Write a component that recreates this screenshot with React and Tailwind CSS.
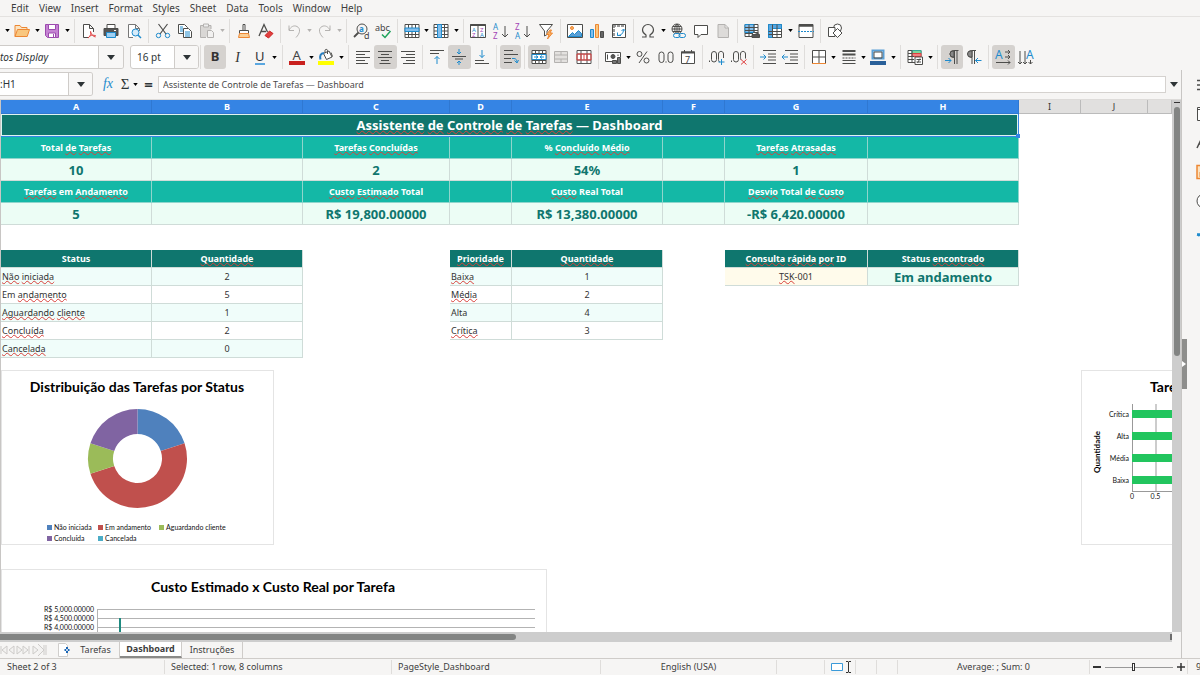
import React, { useState } from 'react';
import { clsx } from 'clsx';

const MENUS = ['Edit', 'View', 'Insert', 'Format', 'Styles', 'Sheet', 'Data', 'Tools', 'Window', 'Help'];

const BLUE = '#1e8bcd';
const ORANGE = '#ed8733';
const RED = '#e04040';
const GRAY = '#b4b2b0';

const letter = (x, y, size, fill, text, weight = 400) => (
  <text x={x} y={y} fontSize={size} fill={fill} stroke="none" fontWeight={weight} fontFamily="Noto Sans, sans-serif">{text}</text>
);

// Every glyph is drawn on a 16x16 grid with a dark 1px stroke by default
const ICONS = {
  open: <><path d="M1 13.5V2.5h5l1.5 2H13v2" fill="#fbe3c0" stroke={ORANGE} /><path d="M1 13.5l2.5-7h12l-2.3 7z" fill="#f9c77f" stroke={ORANGE} /></>,
  save: <><path d="M1.5 1.5h13v13h-11l-2-2z" fill="#c583d3" stroke="#9c4aae" /><path d="M4.5 1.5h7v5h-7z" fill="#fff" stroke="#9c4aae" /><path d="M4.5 10h7v4.5h-7z" fill="#fff" stroke="#9c4aae" /><path d="M9.5 11v3" stroke="#9c4aae" /></>,
  pdf: <><path d="M8 14.5H2.5v-13h6l4 4V9M8.5 1.5v4h4" fill="#fff" /><path d="M7 15c3-2 3-5 2.5-7M7 15c2-3 5-3.5 8-2M9.5 9c1 3 3 4.5 5 5" stroke={RED} /></>,
  print: <><path d="M4 5V1.5h8V5" fill="#fff" /><path d="M1 5.5h14v7H1z" fill="#555" /><path d="M3.5 9.5h9v5h-9z" fill="#9fd0f3" stroke={BLUE} /><path d="M11 7.5h2" stroke="#fff" /></>,
  preview: <><path d="M7 14.5H2.5v-13h7l4 4V8M9.5 1.5v4h4" fill="#fff" stroke="#777" /><circle cx="9.5" cy="9.5" r="3.5" fill="#d6ebfa" stroke={BLUE} /><path d="M12 12l3 3" stroke={BLUE} strokeWidth="1.5" /></>,
  cut: <><path d="M3.5 1L11 11M12.5 1L5 11" strokeWidth="1.2" /><circle cx="3.5" cy="12.5" r="2.2" stroke={BLUE} /><circle cx="12.5" cy="12.5" r="2.2" stroke={BLUE} /></>,
  copy: <><path d="M1.5 1.5h6l3 3v6h-9z" fill="#fff" /><path d="M3 4h3M3 6h3M3 8h3" stroke={BLUE} /><path d="M6.5 5.5h5l3 3v6h-8z" fill="#fff" /><path d="M8 9h5M8 11h5M8 13h5" stroke={BLUE} /></>,
  paste: <><path d="M7 14.5H1.5v-12H12V6" fill="#d9d7d5" stroke={GRAY} /><path d="M4.5 1h5v3h-5z" fill="#eee" stroke={GRAY} /><path d="M8.5 7.5h4l2 2v5h-6z" fill="#f2f1f0" stroke={GRAY} /></>,
  brush: <><path d="M7 1.5h2v6H7zM3.5 7.5h9v3h-9z" fill="#fff" /><path d="M3.5 10.5h9l1 4h-11z" fill="#fbcf96" stroke={ORANGE} /></>,
  clear: <><path d="M1 13L6 1.5 9.5 9M3 8.5h5" strokeWidth="1.3" /><path d="M7 12.5l4.5-4.5 3.5 2.5-4.5 4.5z" fill={RED} stroke="#c22" /></>,
  undo: <path d="M2 2.5v5h5M2 7c2-3.5 5-5 8-3.5 4 2 3 7-1 11" stroke={GRAY} />,
  redo: <path d="M14 2.5v5H9M14 7c-2-3.5-5-5-8-3.5-4 2-3 7 1 11" stroke={GRAY} />,
  find: <><circle cx="9" cy="6" r="5" /><path d="M5.5 9.5L1 14" strokeWidth="1.8" />{letter(6, 8.5, 8, BLUE, 'a', 700)}{letter(11, 16, 9, '#444', 'd')}</>,
  spell: <>{letter(0, 8, 9, '#444', 'abc')}<path d="M7 11.5l3 3 5.5-6.5" stroke="#1fa35b" strokeWidth="1.5" /></>,
  rows: <><path d="M1 1.5h14v13H1z" fill="#fff" /><path d="M1 11.5h14M4.5 1.5v13M8 1.5v13M11.5 1.5v13" /><path d="M1 5h14v3.5H1z" fill="#83beec" stroke={BLUE} /></>,
  cols: <><path d="M1 1.5h14v13H1z" fill="#fff" /><path d="M1 4.5h14M1 8h14M1 11.5h14M11.5 1.5v13" /><path d="M4.5 1.5h4v13h-4z" fill="#83beec" stroke={BLUE} /></>,
  sort: <><path d="M.5 1.5h15v13H.5zM8 2v12" fill="#fff" /><path d="M.5 2h15" strokeWidth="2" />{letter(2, 8.5, 6, BLUE, 'A')}{letter(10, 8.5, 6, '#a344b5', 'Z')}{letter(2, 14, 6, '#a344b5', 'Z')}{letter(10, 14, 6, BLUE, 'A')}</>,
  asc: <>{letter(0, 7, 8, BLUE, 'A')}{letter(0, 15.5, 8, '#a344b5', 'Z')}<path d="M12 3v11M9 11l3 3 3-3" /></>,
  desc: <>{letter(0, 7, 8, '#a344b5', 'Z')}{letter(0, 15.5, 8, BLUE, 'A')}<path d="M12 3v11M9 11l3 3 3-3" /></>,
  filter: <><path d="M1.5 1.5h13L9 8v3.5L6.5 13V8z" fill="#fff" /><path d="M12 7l-3.5 4.5H11L9.5 16l5-6H12L13.5 7z" fill="#f9b266" stroke={ORANGE} /></>,
  image: <><path d="M.5 1.5h15v13H.5z" fill="#fff" /><circle cx="5" cy="5" r="1.5" fill="#f9b266" stroke={ORANGE} /><path d="M1.5 13.5l4-4 2 2 4-4 3 3v3z" fill="#5a9fd6" stroke={BLUE} /></>,
  chart: <><path d="M1.5 6.5h3v8h-3z" fill="#83beec" stroke={BLUE} /><path d="M6.5 1.5h3v13h-3z" fill="#f9c77f" stroke={ORANGE} /><path d="M11.5 8.5h3v6h-3z" fill="#666" /></>,
  pivot: <><path d="M1.5 1.5h13v13h-13z" fill="#fff" /><path d="M2 3h12M3 2v12" stroke="#999" strokeWidth="2" strokeDasharray="3 1" /><path d="M6.5 9.5v3H10M6.5 12.5c3.5 0 6-2 6-6M10.5 8l2-2 2 2" stroke={BLUE} /></>,
  omega: <path d="M2 14h4v-2C3.5 10.5 2.5 9 2.5 7a5.5 5.5 0 0 1 11 0c0 2-1 3.5-3.5 5v2h4" strokeWidth="1.2" />,
  link: <><circle cx="7" cy="6" r="5" /><path d="M2 6h10M7 1v10M3 3.5h8M3 8.5h8M7 1C4 3.5 4 8.5 7 11M7 1c3 2.5 3 7.5 0 10" /><rect x="3.5" y="10.5" width="6.5" height="4" rx="2" fill="#f6f5f4" stroke={BLUE} /><rect x="9" y="10.5" width="6.5" height="4" rx="2" stroke={BLUE} /></>,
  comment: <path d="M1.5 2.5h13v9H8l-3 3v-3H1.5z" fill="#fff" />,
  header: <path d="M3 1.5h7l3.5 3.5v9.5H3zM10 1.5V5h3.5" fill="#dddbd9" stroke={GRAY} />,
  printArea: <><path d="M1 1.5h13v12H1z" fill="#fff" /><path d="M1 1.5h9v8H1z" fill="#83beec" stroke={BLUE} /><path d="M1 4.5h13M1 7.5h13M1 10.5h8M5 1.5v12M10 1.5v8" /><path d="M8 11.5h7.5v3H8zM9.5 9.5h4.5v2" fill="#555" /></>,
  freeze: <><path d="M1.5 1.5h13v13h-13z" fill="#fff" /><path d="M1.5 1.5h13v4h-9v9h-4z" fill="#5aa7e0" stroke={BLUE} /><path d="M1.5 8.5h13M1.5 11.5h13M5.5 1.5v13M10 1.5v13" /></>,
  split: <><path d="M1 1.5h14v13H1z" fill="#fff" /><path d="M1 2.5h14" strokeWidth="2.5" /><path d="M0 8.5h16" stroke={BLUE} strokeDasharray="2 1" /></>,
  shapes: <><circle cx="10.5" cy="5" r="4" fill="#fff" /><path d="M1.5 4.5H8v9H1.5z" fill="#fff" /><path d="M10.5 5.5l4.5 4.5-4.5 4.5L6 10z" fill="#fff" /></>,
  fontColor: <>{letter(3.5, 10.5, 13, '#444', 'A')}<path d="M0 14h16" stroke="#c9211e" strokeWidth="4" /></>,
  fill: <><path d="M5.5 4.5l5.5-2.500 3 6-5.5 2.500z" fill="#fff" /><path d="M7 4V1.500c0-1.500 2.500-1.500 2.500 0V5M13 3.500l1.500 4" /><path d="M2.500 10.500c-1-4 0-6 3.500-6.500" stroke="#2a7fc0" strokeWidth="2" /><path d="M0 14h16" stroke="#ffff00" strokeWidth="4" /></>,
  left: <path d="M1 2.5h14M1 5.5h9M1 8.5h14M1 11.5h9M1 14.5h12" />,
  center: <path d="M1 2.5h14M4 5.5h8M1 8.5h14M4 11.5h8M2.5 14.5h11" />,
  right: <path d="M1 2.5h14M6 5.5h9M1 8.5h14M6 11.5h9M3 14.5h12" />,
  top: <><path d="M1 1.5h14M1 4.5h9" /><path d="M8 15V7.5M5.5 10L8 7.5l2.5 2.5" stroke={BLUE} /></>,
  middle: <><path d="M1 7.5h14M4 10h8" /><path d="M8 0v5M6 3l2 2 2-2M8 16v-4M6 14l2-2 2 2" stroke={BLUE} /></>,
  bottom: <><path d="M1 11.5h9M1 14.5h14" /><path d="M8 1v7.5M5.5 6L8 8.5 10.5 6" stroke={BLUE} /></>,
  wrap: <><path d="M1 1.5h9M1 5.5h14M1 9.5h7M1 13.5h8" /><path d="M9 9.5h2c2 0 3 1.5 3 4M11.5 11.5l2.5 2.5 1.5-3" stroke={BLUE} /></>,
  merge: <><path d="M1 1.5h14v13H1zM1 4.5h14M1 11.5h14M4.5 1.5v13M8 1.5v13M11.5 1.5v13" fill="#fff" /><path d="M1 5.5h14v5H1z" fill="#fff" stroke={BLUE} /><path d="M3 8h4M9 8h4M5 6.5L7 8 5 9.5M11 6.5L9 8l2 1.5" stroke={BLUE} /></>,
  mergeOff: <><path d="M1.5 2.5h13v11h-13zM1.5 6h13M1.5 10h13M8 2.5V6M8 10v3.5" fill="#e3e1df" stroke={GRAY} /></>,
  split2: <><path d="M1 1.5h14v13H1zM1 5h14M1 11h14M5 1.5v13M11 1.5v13" fill="#fff" stroke="#555" /><path d="M1 5h14v6H1zM5 5v6M8 5v6M11 5v6" stroke={RED} /></>,
  currency: <><path d="M8 12.5H.5v-9h15V8" fill="#fff" /><circle cx="8" cy="7.5" r="2" fill="#555" /><path d="M2.5 5.5v5M13 5.5V7" /><path d="M7.5 11.5h4v3h-4zM12.5 8.5h3v6h-3z" fill="#777" /></>,
  percent: <><circle cx="4.500" cy="5" r="2.500" /><circle cx="11.500" cy="11.500" r="2.500" /><path d="M12 2.500L4 14" /></>,
  number: <><rect x="1" y="3" width="5" height="10.500" rx="2.500" /><rect x="10" y="3" width="5" height="10.500" rx="2.500" /><path d="M8 12.500v1" strokeWidth="1.200" /></>,
  date: <><path d="M1.5 3h13v11.500h-13z" fill="#fff" /><path d="M1 3.5h14" strokeWidth="2" /><path d="M4.5 1v2M11.5 1v2" />{letter(5, 13.5, 9, '#444', '7')}</>,
  addDec: <><path d="M0.500 11.500v1.500" /><rect x="2.500" y="2.500" width="5" height="10.500" rx="2.500" /><path d="M11 13c-1 0-1.500-1-1.500-2.500V5c0-3.500 5-3.500 5 0v4" /><path d="M12.5 10v6M9.5 13h6" stroke={BLUE} /></>,
  delDec: <><path d="M0.500 11.500v1.500" /><rect x="2.500" y="2.500" width="5" height="10.500" rx="2.500" /><path d="M10 11c-.5-1-.5-2-.5-6 0-3.500 5-3.500 5 0v4.500" /><path d="M10 10.5l5.5 5M15.5 10.5l-5.500 5" stroke={RED} /></>,
  indent: <><path d="M3 1.5h13M8 5h8M8 8h8M8 11h8M3 14.5h13" /><path d="M0 8h6M3.5 5.5L6 8l-2.5 2.5" stroke={BLUE} /></>,
  outdent: <><path d="M3 1.5h13M8 5h8M8 8h8M8 11h8M3 14.5h13" /><path d="M6 8H0M2.5 5.5L0 8l2.5 2.5" stroke={BLUE} /></>,
  borders: <><path d="M1.5 14V1.5h13V14M8 1.5V14M1.5 8h13" fill="#fff" /><path d="M1 14.5h14" stroke={ORANGE} /></>,
  lineStyle: <><path d="M1.5 2h13" strokeWidth="2" /><path d="M1.5 5.5h13" strokeWidth="2" /><path d="M1.5 9h13" strokeDasharray="2 1" /><path d="M1.5 11.5h13M1.5 14.5h13" /></>,
  borderColor: <><path d="M2.5 1.5h11v8h-11z" fill="#fff" stroke="#5a9fd6" strokeWidth="2" /><path d="M4 3h8v6H4z" /><path d="M0 14h16" stroke="#2a6099" strokeWidth="4" /></>,
  conditional: <><path d="M1 1.5h13v12H1z" fill="#fff" /><path d="M5 1.5h9v3H5z" fill="#7ed69a" stroke="#3a9" /><path d="M5 4.5h9v3H5z" fill="#f08080" stroke={RED} /><path d="M1 4.5h4M1 7.5h6M1 10.5h6M5 1.5v12" /><path d="M8 8h7.5v7.5H8z" fill="#fff" /><path d="M9.5 10.5h4.5M9.5 13h4.5M13 9.5l-2.5 4.5" /></>,
  ltr: <><path d="M14.5 1.5H9.5a3.5 3.5 0 0 0 0 7H10M10.5 2v13M13 2v13" /><path d="M10 2H9a3 3 0 0 0 0 6h1z" fill="#888" /><path d="M1 11.5h6M4.5 9L7 11.5 4.5 14" stroke={BLUE} /></>,
  rtl: <><path d="M10 1.5H5.5a3.5 3.5 0 0 0 0 7H6M6 2v13M8.5 2v13" /><path d="M6 2H4.5a3 3 0 0 0 0 6H6z" fill="#888" /><path d="M15.5 11.5h-6M12 9l-2.5 2.5L12 14" stroke={BLUE} /></>,
  horizontal: <>{letter(0, 10, 12, BLUE, 'A')}<path d="M10 3h5M13 1l2 2-2 2M10 8h5M13 6l2 2-2 2M1 13.5h14M13 11.5l2 2-2 2" /></>,
  vertical: <>{letter(8, 10, 12, BLUE, 'A')}<path d="M2 2v13M0 13l2 2 2-2M7 2v13M5 13l2 2 2-2M12.5 11v4M10.5 13l2 2 2-2" /></>,
  tabProps: <><path d="M1.5 1.5h14v13h-14zM1.5 3.5h14M5 7h6M5 10h6" fill="#fff" /></>,
  tabStyles: <><path d="M1 13L6.500 1.500 12 13M3 9h7" strokeWidth="1.500" /><path d="M4 15c3 1 5-1 8-1" stroke={BLUE} /></>,
  tabGallery: <><path d="M1 1.5h14v13H1z" fill="#fbe3c0" stroke={ORANGE} strokeWidth="1.5" /><path d="M4 13V8l4-4v9z" fill="#f9c77f" stroke={ORANGE} /></>,
  tabNavigator: <><circle cx="8" cy="8" r="7" fill="#fff" /><path d="M5 11l2-4 4-2-2 4z" fill={BLUE} stroke={BLUE} /></>,
  tabFunctions: <path d="M1 13c3 2 4-1 5-5M1 12h4" stroke={BLUE} strokeWidth="1.5" />,
  burger: <path d="M1 3.5h14M1 8h14M1 12.5h14" strokeWidth="1.5" />,
};

function Icon({ name }) {
  return (
    <svg viewBox="0 0 16 16" className="w-4 h-4 shrink-0 overflow-visible" fill="none" stroke="#4d4d4b" aria-hidden="true">
      {ICONS[name]}
    </svg>
  );
}

function Caret({ label, faded }) {
  return (
    <button aria-label={label} className="w-2 h-6 flex items-center justify-center shrink-0">
      <svg viewBox="0 0 6 4" className={clsx('w-[5px] h-[3px] shrink-0', faded ? 'fill-[#b4b2b0]' : 'fill-black')}><path d="M0 0h6L3 4z" /></svg>
    </button>
  );
}

// "|" after a name adds a drop-down arrow, "~" a faded one; "*" marks a pressed button
function Tools({ items, className }) {
  return (
    <div className={clsx('flex items-center px-[3px] h-6 shrink-0', className)}>
      {items.map((item) => {
        const name = item.replace(/[|~*]/g, '');
        return (
          <React.Fragment key={item}>
            {name && (
              <button
                aria-label={name}
                aria-pressed={item.includes('*')}
                className={clsx('flex-1 h-6 flex items-center justify-center rounded-[3px]', item.includes('*') && 'bg-[#d5d2cf]')}
              >
                {TEXT_BUTTONS[name] || <Icon name={name} />}
              </button>
            )}
            {/[|~]/.test(item) && <Caret label={`${name} options`} faded={item.includes('~')} />}
          </React.Fragment>
        );
      })}
    </div>
  );
}

const TEXT_BUTTONS = {
  bold: <span className="text-[13px] font-bold text-[#333]">B</span>,
  italic: <span className="text-[14px] italic font-['Liberation_Serif',serif] text-[#333]">I</span>,
  underline: <span className="text-[13px] leading-[14px] border-b-2 border-[#5aa7e0] text-[#333]">U</span>,
};

const SEP = 'border-r border-[#dfdddb]';

const STANDARD = [
  [['|', 'open|', 'save|'], 'w-[75px]'],
  [['pdf', 'print', 'preview'], 'w-[74px]'],
  [['cut', 'copy', 'paste~'], 'w-[81px]'],
  [['brush', 'clear'], 'w-[51px]'],
  [['undo~', 'redo~'], 'w-[66px]'],
  [['find', 'spell'], 'w-[51px]'],
  [['rows|', 'cols|'], 'w-[66px]'],
  [['sort', 'asc', 'desc', 'filter'], 'w-[97px]'],
  [['image', 'chart', 'pivot'], 'w-[73px]'],
  [['omega|', 'link', 'comment', 'header'], 'w-[104px]'],
  [['printArea', 'freeze|', 'split'], 'w-[83px]'],
  [['shapes'], 'w-[28px] border-r-0'],
];

const FORMATTING = [
  [['bold*', 'italic', 'underline|'], 'w-[82px]'],
  [['fontColor|', 'fill|'], 'w-[66px]'],
  [['left', 'center*', 'right'], 'w-[74px]'],
  [['top', 'middle*', 'bottom'], 'w-[74px]'],
  [['wrap*'], 'w-[28px]'],
  [['merge*', 'mergeOff', 'split2'], 'w-[74px]'],
  [['currency|', 'percent', 'number', 'date'], 'w-[104px]'],
  [['addDec', 'delDec'], 'w-[51px]'],
  [['indent', 'outdent'], 'w-[51px]'],
  [['borders|', 'lineStyle|', 'borderColor|'], 'w-[96px]'],
  [['conditional|'], 'w-[37px]'],
  [['ltr*', 'rtl'], 'w-[51px]'],
  [['horizontal*', 'vertical'], 'w-[51px] border-r-0'],
];

function Combo({ label, value, className, inputClass, arrowClass }) {
  return (
    <div className={clsx('flex h-6 border border-[#cfccc9] bg-white rounded-[3px] overflow-hidden shrink-0', className)}>
      <input aria-label={label} defaultValue={value} className={clsx('min-w-0 flex-1 outline-none text-[10px] text-[#2e3436]', inputClass)} />
      <button aria-label={`${label} list`} className={clsx('border-l border-[#cfccc9] bg-[#f8f7f6] flex items-center justify-center', arrowClass)}>
        <svg viewBox="0 0 8 5" className="w-2 h-[5px] fill-[#2e3436]"><path d="M0 0h8L4 5z" /></svg>
      </button>
    </div>
  );
}

// Words between underscores are flagged by the spell checker
function Spelled({ text }) {
  return text.split('_').map((part, i) =>
    i % 2 ? (
      <span key={i} className="underline decoration-wavy decoration-[#d8403a] decoration-1 underline-offset-0 [text-decoration-skip-ink:none]">{part}</span>
    ) : part
  );
}

const COLUMNS = [
  ['A', 'w-[151px]'], ['B', 'w-[151px]'], ['C', 'w-[147px]'], ['D', 'w-[62px]'], ['E', 'w-[151px]'], ['F', 'w-[62px]'],
  ['G', 'w-[143px]'], ['H', 'w-[151px]'], ['I', 'w-[62px]'], ['J', 'w-[67px]'], ['', ''],
];

const KINDS = {
  label: 'bg-[#14b8a6] text-white font-bold text-[9px] text-center border-[#8fd5cc]',
  value: 'bg-[#ecfdf5] text-[#0f766e] font-bold text-[13px] text-center border-[#cfdcd8]',
  head: 'bg-[#0f766e] text-white font-bold text-[9px] text-center border-[#cfdcd8]',
  textOdd: 'bg-[#f0fdfa] text-[#333] text-[9px] text-left pl-px border-[#cfdcd8]',
  textEven: 'bg-white text-[#333] text-[9px] text-left pl-px border-[#cfdcd8]',
  numOdd: 'bg-[#f0fdfa] text-[#333] text-[9px] text-center border-[#cfdcd8]',
  numEven: 'bg-white text-[#333] text-[9px] text-center border-[#cfdcd8]',
  input: 'bg-[#fffbeb] text-[#333] text-[9px] text-center border-[#cfdcd8]',
};

const all = (kind, texts) => texts.map((t) => [kind, t]);

const ROWS = [
  { h: 'h-[22px]', cells: all('label', ['Total _de_ _Tarefas_', '', '_Tarefas_ _Concluídas_', '', '% _Concluído_ _Médio_', '', '_Tarefas_ _Atrasadas_', '']) },
  { h: 'h-[22px]', cells: all('value', ['10', '', '2', '', '54%', '', '1', '']) },
  { h: 'h-[22px]', cells: all('label', ['_Tarefas_ em _Andamento_', '', '_Custo_ _Estimado_ Total', '', '_Custo_ Real Total', '', '_Desvio_ Total _de_ _Custo_', '']) },
  { h: 'h-[22px]', cells: all('value', ['5', '', 'R$ 19,800.00000', '', 'R$ 13,380.00000', '', '-R$ 6,420.00000', '']) },
  { h: 'h-[25px]', cells: [] },
  { h: 'h-[18px]', cells: [['head', 'Status'], ['head', '_Quantidade_'], null, ['head', '_Prioridade_'], ['head', '_Quantidade_'], null, ['head', '_Consulta_ _rápida_ _por_ ID'], ['head', 'Status _encontrado_']] },
  { h: 'h-[18px]', cells: [['textOdd', '_Não_ _iniciada_'], ['numOdd', '2'], null, ['textOdd', '_Baixa_'], ['numOdd', '1'], null, ['input', '_TSK_-001'], ['value', 'Em andamento']] },
  { h: 'h-[18px]', cells: [['textEven', 'Em _andamento_'], ['numEven', '5'], null, ['textEven', '_Média_'], ['numEven', '2']] },
  { h: 'h-[18px]', cells: [['textOdd', '_Aguardando_ _cliente_'], ['numOdd', '1'], null, ['textOdd', 'Alta'], ['numOdd', '4']] },
  { h: 'h-[18px]', cells: [['textEven', '_Concluída_'], ['numEven', '2'], null, ['textEven', '_Crítica_'], ['numEven', '3']] },
  { h: 'h-[18px]', cells: [['textOdd', '_Cancelada_'], ['numOdd', '0']] },
];

function Sheet() {
  return (
    <table className="w-full table-fixed border-separate border-spacing-0">
      <colgroup>
        {COLUMNS.map(([name, width], i) => <col key={i} className={width} />)}
      </colgroup>
      <thead>
        <tr>
          {COLUMNS.map(([name], i) => (
            <th
              key={i}
              className={clsx(
                'h-[14px] p-0 text-[9px] leading-[12px] border-r border-b',
                i < 8 ? 'bg-[#3584e4] text-white font-bold border-[#2f78d2]' : 'bg-[#e1e0df] text-[#333] font-normal border-[#bbb]'
              )}
            >
              {name}
            </th>
          ))}
        </tr>
      </thead>
      <tbody>
        <tr>
          <td colSpan={8} className="relative h-[23px] p-0 bg-[#0f766e] text-white text-center text-[13px] leading-[20px] font-bold border-r border-b border-[#3584e4] shadow-[inset_0_0_0_1px_#dff3f0]">
            <Spelled text="_Assistente_ _de_ _Controle_ _de_ _Tarefas_ — Dashboard" />
            <span className="absolute -right-0.5 -bottom-0.5 w-1 h-1 bg-[#3584e4]" />
          </td>
          <td colSpan={3} />
        </tr>
        {ROWS.map((row, r) => (
          <tr key={r}>
            {COLUMNS.map((_, c) => {
              const cell = row.cells[c];
              return (
                <td
                  key={c}
                  className={clsx(
                    'p-0 leading-[16px] whitespace-nowrap overflow-hidden',
                    row.h,
                    cell && 'border-r border-b',
                    cell && KINDS[cell[0]]
                  )}
                >
                  {cell && <Spelled text={cell[1]} />}
                </td>
              );
            })}
          </tr>
        ))}
      </tbody>
    </table>
  );
}

const STATUS_SLICES = [
  { name: 'Não iniciada', value: 2, color: '#4f81bd', x: 46, y: 157 },
  { name: 'Em andamento', value: 5, color: '#c0504d', x: 97, y: 157 },
  { name: 'Aguardando cliente', value: 1, color: '#9bbb59', x: 158, y: 157 },
  { name: 'Concluída', value: 2, color: '#8064a2', x: 46, y: 168 },
  { name: 'Cancelada', value: 0, color: '#4bacc6', x: 97, y: 168 },
];

function slicePath(from, to, cx, cy, outer, inner) {
  const at = (f, r) => `${cx + r * Math.sin(f * 2 * Math.PI)} ${cy - r * Math.cos(f * 2 * Math.PI)}`;
  const large = to - from > 0.5 ? 1 : 0;
  return `M${at(from, outer)}A${outer} ${outer} 0 ${large} 1 ${at(to, outer)}L${at(to, inner)}A${inner} ${inner} 0 ${large} 0 ${at(from, inner)}Z`;
}

function StatusChart() {
  const total = STATUS_SLICES.reduce((sum, s) => sum + s.value, 0);
  let start = 0;
  return (
    <svg viewBox="0 0 273 175" className="w-[273px] h-[175px] font-[Lato,sans-serif]" role="img" aria-label="Distribuição das Tarefas por Status">
      <rect x="0.5" y="0.5" width="272" height="174" fill="#fff" stroke="#e4e4e4" />
      <text x="136" y="22" textAnchor="middle" fontSize="14" fontWeight="700">Distribuição das Tarefas por Status</text>
      {STATUS_SLICES.map((s) => {
        const from = start / total;
        start += s.value;
        return s.value > 0 && <path key={s.name} d={slicePath(from, start / total, 136.5, 88.5, 49.5, 24.5)} fill={s.color} />;
      })}
      {STATUS_SLICES.map((s) => (
        <g key={s.name}>
          <rect x={s.x} y={s.y - 2} width="5" height="5" fill={s.color} />
          <text x={s.x + 7} y={s.y + 3} fontSize="7" fill="#111">{s.name}</text>
        </g>
      ))}
    </svg>
  );
}

function PriorityChart() {
  const bars = [['Crítica', 3], ['Alta', 4], ['Média', 2], ['Baixa', 1]];
  return (
    <svg viewBox="0 0 273 175" className="w-[273px] h-[175px] font-[Lato,sans-serif]" role="img" aria-label="Tarefas por Prioridade">
      <rect x="0.5" y="0.5" width="272" height="174" fill="#fff" stroke="#e4e4e4" />
      <text x="69" y="22" fontSize="14" fontWeight="700">Tarefas por Prioridade</text>
      <text transform="translate(19 82) rotate(-90)" textAnchor="middle" fontSize="8" fontWeight="700">Quantidade</text>
      {[0, 0.5].map((n) => (
        <g key={n}>
          <path d={`M${51.5 + n * 47} 34v87`} stroke="#999" />
          <text x={51 + n * 47} y="129" textAnchor="middle" fontSize="7" fill="#111">{n}</text>
        </g>
      ))}
      <path d="M51 121.5h188" stroke="#999" />
      {bars.map(([name, value], i) => (
        <g key={name}>
          <rect x="51" y={40 + i * 22} width={value * 47} height="8" fill="#22c55e" />
          <text x="48" y={47 + i * 22} textAnchor="end" fontSize="7" fill="#111">{name}</text>
        </g>
      ))}
    </svg>
  );
}

function CostChart() {
  const ticks = ['5,000', '4,500', '4,000', '3,500'];
  return (
    <svg viewBox="0 0 546 175" className="w-[546px] h-[175px] font-[Lato,sans-serif]" role="img" aria-label="Custo Estimado x Custo Real por Tarefa">
      <rect x="0.5" y="0.5" width="545" height="174" fill="#fff" stroke="#e4e4e4" />
      <text x="272" y="23" textAnchor="middle" fontSize="14" fontWeight="700">Custo Estimado x Custo Real por Tarefa</text>
      {ticks.map((tick, i) => (
        <g key={tick}>
          <path d={`M96 ${40.5 + i * 9}h438`} stroke="#b3b3b3" />
          <text x="93" y={43 + i * 9} textAnchor="end" fontSize="7" fill="#111">R$ {tick}.00000</text>
        </g>
      ))}
      <path d="M96.5 40v110" stroke="#b3b3b3" />
      <rect x="118" y="49" width="2" height="100" fill="#1f8a80" />
    </svg>
  );
}

function SheetTabs() {
  const [active, setActive] = useState('Dashboard');
  return (
    <div className="flex items-stretch h-4 text-[#3d3d3d]">
      <svg viewBox="0 0 48 16" className="w-12 h-4 shrink-0" fill="#f3f2f1" stroke="#cdcbc9">
        <path d="M1 4v8M7 4L2 8l5 4zM14 4L9 8l5 4zM17 4l5 4-5 4zM23 4l5 4-5 4zM29 4v8M33 4l5 4-5 4zM38 2l6 6-6 6M44 3v10M46 3v10" />
      </svg>
      <button aria-label="Add sheet" className="w-6 flex items-center justify-center pl-2">
        <svg viewBox="0 0 14 14" className="w-3.5 h-3.5" fill="none">
          <path d="M1.5.5h7l2 2v11h-9z" fill="#fff" stroke="#d0cecc" />
          <path d="M10 4v6M7.5 7h5" stroke="#1b66b5" strokeWidth="2" />
          <circle cx="10" cy="7" r="1" fill="#fff" />
        </svg>
      </button>
      {['Tarefas', 'Dashboard', 'Instruções'].map((tab) => (
        <button
          key={tab}
          onClick={() => setActive(tab)}
          className={clsx(
            tab === 'Tarefas' && 'w-12',
            tab === 'Dashboard' && 'w-[62px]',
            tab === 'Instruções' && 'w-[61px]',
            'text-[9px] leading-[14px] border-r border-[#cfccc9] text-center',
            active === tab && 'bg-white font-bold border-b-2 border-b-[#8a8a88]'
          )}
        >
          {tab}
        </button>
      ))}
    </div>
  );
}

function StatusBar() {
  const cell = 'h-3.5 flex items-center shrink-0 border-r border-[#dfdddb]';
  return (
    <footer className="flex items-center h-[17px] border-t border-[#cfccc9] text-[9px] text-[#3d3d3d] overflow-hidden whitespace-nowrap">
      <div className={clsx(cell, 'w-[165px] pl-[7px]')}>Sheet 2 of 3</div>
      <div className={clsx(cell, 'w-[227px] pl-1.5')}>Selected: 1 row, 8 columns</div>
      <div className={clsx(cell, 'w-[209px] pl-1.5')}>PageStyle_Dashboard</div>
      <div className={clsx(cell, 'w-[176px] justify-center')}>English (USA)</div>
      <div className={clsx(cell, 'w-12')} />
      <div className={clsx(cell, 'w-[31px] pl-1.5 gap-1')}>
        <svg viewBox="0 0 20 12" className="w-5 h-3" fill="none">
          <path d="M.5 2.5h11v7H.5z" fill="#fff" stroke="#3a9ad9" />
          <path d="M15 .5h2l.5.5.5-.5h2M17.5 1v10M15 11.5h2l.5-.5.5.5h2" stroke="#333" />
        </svg>
      </div>
      <div className={clsx(cell, 'w-[21px]')} />
      <div className={clsx(cell, 'w-[21px]')} />
      <div className={clsx(cell, 'flex-1 justify-center')}>Average: ; Sum: 0</div>
      <div className={clsx(cell, 'w-[98px] justify-center gap-1')}>
        <button aria-label="Zoom out" className="w-2 h-2 flex items-center"><span className="w-2 h-0.5 bg-[#333]" /></button>
        <input
          type="range"
          aria-label="Zoom"
          defaultValue="42"
          className="w-[68px] h-2 appearance-none bg-[linear-gradient(#999,#999)] bg-[length:100%_1px] bg-center bg-no-repeat [&::-webkit-slider-thumb]:appearance-none [&::-webkit-slider-thumb]:w-[3px] [&::-webkit-slider-thumb]:h-2 [&::-webkit-slider-thumb]:bg-white [&::-webkit-slider-thumb]:border [&::-webkit-slider-thumb]:border-[#333]"
        />
        <button aria-label="Zoom in" className="w-2 h-2">
          <svg viewBox="0 0 8 8" className="w-2 h-2" stroke="#333" strokeWidth="1.5"><path d="M4 0v8M0 4h8" /></svg>
        </button>
      </div>
      <div className="w-[12px] pl-2 shrink-0">96%</div>
    </footer>
  );
}

function Sidebar() {
  return (
    <aside className="relative w-[19px] shrink-0 border-l border-[#c8c6c4] overflow-hidden">
      <div className="flex flex-col items-start pl-3.5 pt-[7px] gap-[13px]">
        {['burger', 'tabProps', 'tabStyles', 'tabGallery', 'tabNavigator', 'tabFunctions'].map((name) => (
          <button key={name} aria-label={name} className="w-4 h-4"><Icon name={name} /></button>
        ))}
      </div>
      <button aria-label="Hide sidebar" className="absolute left-0 top-[269px] w-[5px] h-[50px] bg-[#8e8e8c] flex items-center">
        <svg viewBox="0 0 4 6" className="w-1 h-1.5 fill-white"><path d="M0 0l4 3-4 3z" /></svg>
      </button>
    </aside>
  );
}

export default function App() {
  return (
    <div className="h-screen flex flex-col overflow-hidden bg-[#f6f5f4] font-['Noto_Sans',sans-serif] text-[#2e3436]">
      <nav className="flex items-center h-[17px] shrink-0 pl-[11px] gap-2.5 text-[10px] leading-[16px] text-[#3d3d3d] border-b border-[#e4e2e0]">
        {MENUS.map((menu) => <button key={menu}>{menu}</button>)}
      </nav>

      <div className="flex items-center h-[27px] shrink-0">
        {STANDARD.map(([items, width]) => <Tools key={items[items.length - 1]} items={items} className={clsx(SEP, width)} />)}
      </div>

      <div className="flex items-center h-[26px] shrink-0">
        <Combo label="Font name" value="tos Display" className="w-[124px] border-l-0 rounded-l-none" inputClass="italic" arrowClass="w-[25px]" />
        <Combo label="Font size" value="16 pt" className="w-[69px] ml-1.5" inputClass="pl-1.5" arrowClass="w-6" />
        <div className={clsx('w-0.5 h-6 shrink-0', SEP)} />
        {FORMATTING.map(([items, width]) => <Tools key={items[0]} items={items} className={clsx(SEP, width)} />)}
      </div>

      <div className="flex flex-1 min-h-0">
        <main className="flex flex-col flex-1 min-w-0">
          <div className="flex items-center h-[30px] shrink-0 pb-px border-b border-[#dddbd9]">
            <Combo label="Name box" value=":H1" className="w-[93px] border-l-0 rounded-l-none" arrowClass="w-6" />
            <button aria-label="Function wizard" className="w-[22px] ml-1 text-[14px] leading-4 italic font-['Liberation_Serif',serif] text-[#1e8bcd]">fx</button>
            <button aria-label="Select function" className="w-3 text-[15px] leading-4 font-['Liberation_Serif',serif]">Σ</button>
            <Caret label="Function options" />
            <button aria-label="Formula" className="w-[19px] text-[15px] leading-4 font-bold text-center">=</button>
            <input
              aria-label="Formula input"
              defaultValue="Assistente de Controle de Tarefas — Dashboard"
              className="flex-1 min-w-0 h-[17px] px-1 bg-white border border-[#d5d2cf] outline-none text-[9px] text-[#4a4a4a]"
            />
            <button aria-label="Expand formula bar" className="w-[15px] flex items-center justify-center">
              <svg viewBox="0 0 8 5" className="w-2 h-[5px] fill-[#2e3436]"><path d="M0 0h8L4 5z" /></svg>
            </button>
          </div>

          <div className="flex flex-1 min-h-0">
            <div className="relative flex-1 min-w-0 overflow-hidden bg-white border-l border-[#c8c6c4]">
              <Sheet />
              <div className="absolute left-0 top-[270px]"><StatusChart /></div>
              <div className="absolute left-[1080px] top-[270px]"><PriorityChart /></div>
              <div className="absolute left-0 top-[469px]"><CostChart /></div>
            </div>
            <div className="w-[9px] shrink-0 bg-[#cdcdcd] px-px pt-0.5 flex flex-col items-center">
              <span className="w-1.5 h-px bg-[#333] mb-1" />
              <span className="w-1.5 h-[47%] rounded-full bg-[#828483]" />
            </div>
          </div>
          <div className="flex items-center h-[10px] shrink-0 bg-[#cdcdcd] mr-[9px] justify-between">
            <span className="w-[44%] h-1.5 rounded-r-full bg-[#828483]" />
            <span className="w-0.5 h-1.5 bg-[#6d6d6d]" />
          </div>
          <SheetTabs />
        </main>
        <Sidebar />
      </div>
      <StatusBar />
    </div>
  );
}
